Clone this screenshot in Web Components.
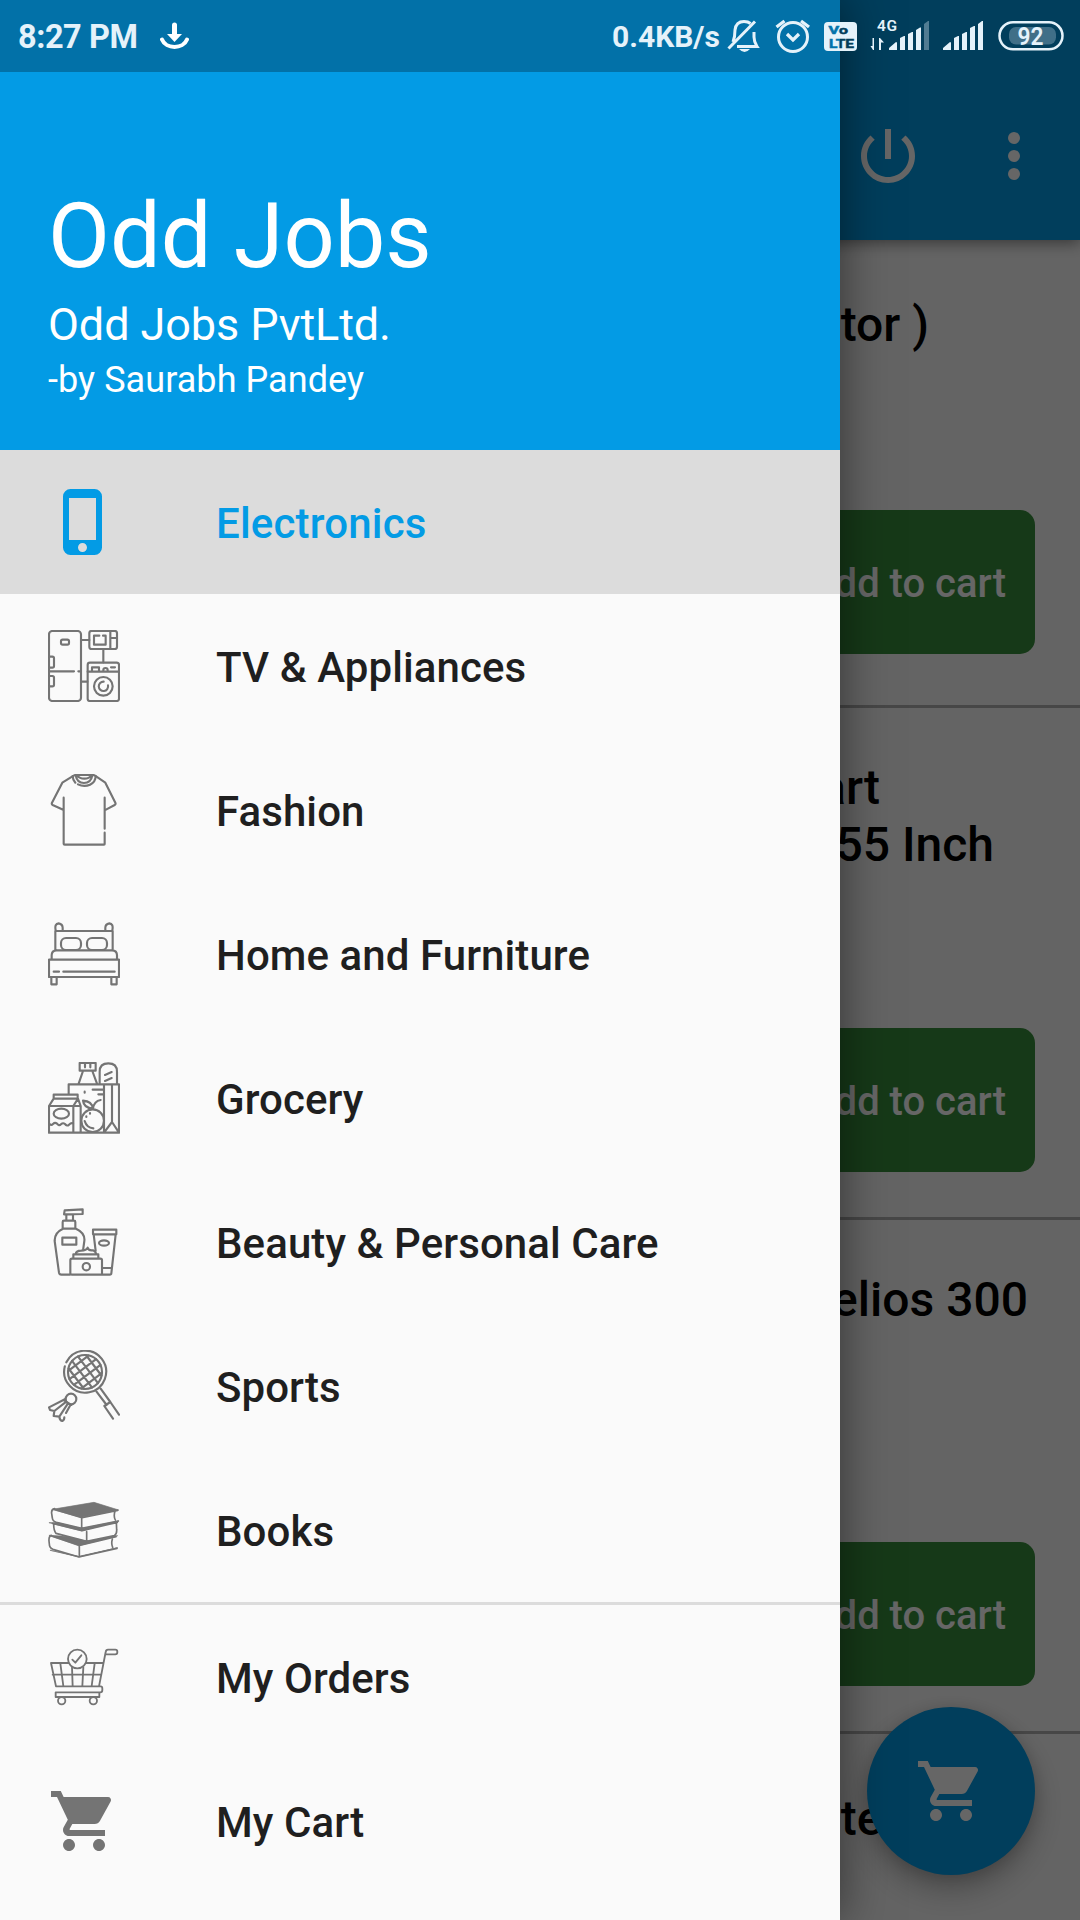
<!DOCTYPE html>
<html lang="en">
<head>
<meta charset="utf-8">
<title>Odd Jobs</title>
<style>
html,body{margin:0;width:1080px;height:1920px;overflow:hidden;background:#fafafa;font-family:Roboto,"Noto Sans",sans-serif}
</style>
</head>
<body>
<odd-app></odd-app>
<script>
const define = (name, html) => customElements.define(name, class extends HTMLElement {
  constructor() {
    super();
    this.attachShadow({ mode: 'open' }).innerHTML = typeof html === 'function' ? html(this) : html;
  }
});

const CART = 'M7 18c-1.1 0-1.99.9-1.99 2S5.9 22 7 22s2-.9 2-2-.9-2-2-2zM1 2v2h2l3.6 7.59-1.35 2.45c-.16.28-.25.61-.25.96 0 1.1.9 2 2 2h12v-2H7.42c-.14 0-.25-.11-.25-.25l.03-.12.9-1.63h7.45c.75 0 1.41-.41 1.75-1.03l3.58-6.49A1.003 1.003 0 0 0 20 4H5.21l-.94-2H1zm16 16c-1.1 0-1.99.9-1.99 2s.89 2 1.99 2 2-.9 2-2-.9-2-2-2z';

/* Line icons are drawn on a grid of three units per pixel. */
const ICONS = {
  phone: ['0 0 24 24', '<path fill="currentColor" stroke="none" d="M15.5 1h-8A2.5 2.5 0 0 0 5 3.5v17A2.5 2.5 0 0 0 7.500 23h8a2.500 2.500 0 0 0 2.500-2.500v-17A2.500 2.500 0 0 0 15.500 1zm-4 21c-.83 0-1.500-.67-1.500-1.500s.67-1.500 1.500-1.500 1.500.67 1.500 1.500-.67 1.500-1.500 1.500zm4.500-4H7V4h9v14z"/>'],
  appliances: ['144 570 216 216', `
    <rect x="147" y="573" width="96" height="210" rx="10"/>
    <rect x="183" y="599" width="24" height="15" rx="5"/>
    <path d="M147 650h10q5 0 5 5v23q0 5-5 5h-10M147 708h10q5 0 5 5v21q0 5-5 5h-10M147 694h75M235 694h8M243 600h25M310 628v39M243 725h19"/>
    <rect x="268" y="573" width="83" height="54" rx="7"/><path d="M331 573v54M331 594h20M298 587h-16v27h35v-27h-8"/>
    <rect x="263" y="668" width="94" height="115" rx="7"/><path d="M263 695h94M276 695v-13h21v13M310 695v-5q0-6 6.500-6t6.500 6v5M333 682h12"/>
    <circle cx="310" cy="739" r="28"/><path d="M311 725a14 14 0 1 0 13 11"/>`],
  fashion: ['54 72 216 216', `
    <path d="M101 143v139q0 2 3 2h118q2 0 2-2v-34M224 236v-93M101 180l-33-15q-4-2-2-7l31-60 34-21q3-2 7-2h50q4 0 7 2l31 21 30 60q2 5-2 7l-26 14"/>
    <path d="M128 78q0 11 8 20M197 78q0 18-17 26-18 8-36-1M137 76q4 23 25 23t25-23M141 76q8 10 22 10t22-10"/>`],
  furniture: ['54 504 216 216', `
    <path d="M57 629h210v52H57zM65 629v-13q0-15 15-15h166q15 0 15 15v13M76 601v-58h172v58M77 541q-4-20 9-21 13 2 12 16v6M247 541q4-20-9-21-13 2-12 16v6M64 681v22h16v-22M244 681v22h16v-22M71 665h16M100 665h154"/>
    <rect x="93" y="564" width="60" height="36" rx="15"/><rect x="171" y="564" width="60" height="36" rx="15"/>`],
  grocery: ['54 66 216 216', `
    <path d="M57 278h210M57 278v-80h95v80M130 198v80M57 198l14-22h73l8 22M71 176v-12h72v12M144 176l-14 22M116 162v-29h151v145M149 69h48v23h-48zM165 70v12M181 70v12M159 93l-13 38M187 93l14 38M209 131V95q0-25 26-25t26 25v36M225 105l20-9M225 123l20-9M222 133v145M246 133v112M222 278l24-32 21 32M188 149h34M205 163h17M164 155v3"/>
    <ellipse cx="94" cy="221" rx="23" ry="15"/><path d="M57 250q6 8 12 2t12-1q6 8 12 2t12-1q6 8 12 2t12-4"/>
    <circle cx="188" cy="242" r="34"/><path d="M189 206q-3-22-30-24 2 22 30 24zM189 206q3-23 23-26M164 243q6 20 26 22M169 229v2M180 219v2"/>`],
  beauty: ['54 498 216 216', `
    <path d="M120 704H94q-6 0-7-6L74 603q-1-25 25-37h39q28 13 25 37l-4 29M98 565v-19q0-4 4-4h30q4 0 4 4v19M109 542v-18M129 542v-18M102 523l2-12 54-3v14zM97 593h42v21H97zM189 569h70v14h-70zM191 583l6 50M257 583l-13 117q0 4-5 4H126q-5 0-5-5v-38q0-5 5-5h85q5 0 5 5v43M216 684h27M130 656v-13h75v13M137 643q1-11 16-11 16-1 20-9 1 8 12 8h5q7 4 10 12"/>
    <ellipse cx="222" cy="609" rx="15" ry="8"/><circle cx="169" cy="680" r="11"/>`],
  sports: ['54 60 216 216', `
    <path d="M109 97a63 63 0 1 1-4.500 12"/><circle cx="165" cy="126" r="51"/>
    <path transform="translate(165 126) rotate(-37)" d="M-50-11H50M-50 11H50M-38-33H38M-38 33H38M-11-50V50M11-50V50M-33-38V38M33-38V38"/>
    <path d="M199 184l31 41M212 176l29 40M223 228l18-12 26 38M223 228l26 38"/>
    <circle cx="123" cy="207" r="16"/>
    <path d="M106 207l-49 25 3 8 13 3 33-26M73 243l-2 15 17 2 24-37M88 260q1 12 9 13 6-2 6-11M120 227l-12 22M102 211l22 14"/>`],
  books: ['54 492 216 216', `
    <path fill="currentColor" stroke-width="2" d="M67 538l125-21 74 23-111 22zM58 578l24 0 73 18 111-23-110 29zM58 616l48 3 65 15 92-17-116 30zM61 661l86 20 116-28-116 26z"/>
    <path stroke-width="5" d="M74 536q-11 2-9 15l2 13q1 10 12 13l76 18 110-22M155 564v29M255 544q-5 14 1 26M71 582q0 20 7 28l92 24 83-17q8-5 7-18l-1-22M170 605v28M64 616q-8 2-7 17l1 9q0 12 11 16l78 23 114-26M148 647v32M247 628q-4 13 1 24M74 538l82 25 107-22M68 580l88 22 106-25M62 617l86 29 110-26"/>`],
  orders: ['144 153 216 216', `
    <g stroke-width="5.5"><path d="M205 219h-52l15 70h129l20-103q1-7 7-7h22q6 0 6 6v2q0 6-6 6h-28M259 219h52M158 254h146M181 220l9 68M216 232l2 56M250 232l-3 56M284 220l-9 68M168 289h134q5 0 5 7v4q0 7-6 7H167v14h131v-14"/>
    <circle cx="232" cy="207" r="28"/><path d="M217 209l9 9 18-22"/><circle cx="185" cy="332" r="11"/><circle cx="280" cy="332" r="11"/></g>`],
  cart: ['0 0 24 24', `<path fill="currentColor" stroke="none" d="${CART}"/>`],
  power: ['0 0 24 24', '<path fill="currentColor" stroke="none" d="M13 3h-2v10h2V3zm4.83 2.17l-1.42 1.42C17.99 7.86 19 9.810 19 12c0 3.870-3.130 7-7 7s-7-3.130-7-7c0-2.190 1.010-4.140 2.580-5.420L6.170 5.170C4.230 6.820 3 9.260 3 12c0 4.970 4.030 9 9 9s9-4.030 9-9c0-2.740-1.230-5.180-3.170-6.830z"/>'],
  more: ['0 0 24 24', '<g fill="currentColor" stroke="none"><circle cx="12" cy="6" r="2"/><circle cx="12" cy="12" r="2"/><circle cx="12" cy="18" r="2"/></g>']
};

define('odd-icon', el => {
  const [box, body] = ICONS[el.getAttribute('name')];
  return `<style>:host{display:block;width:72px;height:72px;flex:none}svg{display:block;width:100%;height:100%}</style>
  <svg viewBox="${box}" fill="none" stroke="currentColor" stroke-width="6.4" stroke-linecap="round" stroke-linejoin="round">${body}</svg>`;
});

define('drawer-item', `<style>
:host{display:flex;align-items:center;gap:96px;height:144px;padding-left:48px;box-sizing:border-box;color:#1f1f1f;font-size:42px;font-weight:500;letter-spacing:.08px}
:host([selected]){background:#dcdcdc;color:#039be5;letter-spacing:.18px}
::slotted(odd-icon){color:#747474}
:host([selected]) ::slotted(odd-icon){color:#039be5}
span{white-space:nowrap;padding-top:2px}
</style><slot name="icon"></slot><span><slot></slot></span>`);

define('nav-drawer', `<style>
:host{display:flex;flex-direction:column;width:840px;height:1920px;background:#fafafa;box-shadow:0 0 46px rgba(0,0,0,.5)}
header{height:450px;box-sizing:border-box;padding:0 48px 49px;background:#039be5;color:#fff;display:flex;flex-direction:column;justify-content:flex-end}
h1{margin:0 0 8px;font-weight:400;font-size:90px;line-height:106px}
p{margin:0 0 8px;font-size:45px;line-height:53px;letter-spacing:-.1px}
small{font-size:36px;line-height:42px;letter-spacing:.06px}
hr{margin:0;border:0;height:3px;background:#dcdcdc;flex:none}
</style>
<header><h1>Odd Jobs</h1><p>Odd Jobs PvtLtd.</p><small>-by Saurabh Pandey</small></header>
<nav>
<drawer-item selected><odd-icon slot="icon" name="phone"></odd-icon>Electronics</drawer-item>
<drawer-item><odd-icon slot="icon" name="appliances"></odd-icon>TV &amp; Appliances</drawer-item>
<drawer-item><odd-icon slot="icon" name="fashion"></odd-icon>Fashion</drawer-item>
<drawer-item><odd-icon slot="icon" name="furniture"></odd-icon>Home and Furniture</drawer-item>
<drawer-item><odd-icon slot="icon" name="grocery"></odd-icon>Grocery</drawer-item>
<drawer-item><odd-icon slot="icon" name="beauty"></odd-icon>Beauty &amp; Personal Care</drawer-item>
<drawer-item><odd-icon slot="icon" name="sports"></odd-icon>Sports</drawer-item>
<drawer-item><odd-icon slot="icon" name="books"></odd-icon>Books</drawer-item>
<hr>
<drawer-item><odd-icon slot="icon" name="orders"></odd-icon>My Orders</drawer-item>
<drawer-item><odd-icon slot="icon" name="cart"></odd-icon>My Cart</drawer-item>
</nav>`);

define('app-toolbar', `<style>
:host{display:flex;justify-content:flex-end;align-items:flex-end;gap:54px;height:240px;flex:none;box-sizing:border-box;padding:0 30px 48px;background:#039be5;color:#fff;box-shadow:0 3px 14px rgba(0,0,0,.45);position:relative}
</style><odd-icon name="power"></odd-icon><odd-icon name="more"></odd-icon>`);

define('product-card', el => `<style>
:host{display:flex;flex-direction:column;justify-content:space-between;align-items:flex-end;box-sizing:border-box;padding:52px 45px 45px 0;border-bottom:3px solid #b2b2b2;flex:none}
:host([clipped]){border-bottom:0}
.title{display:flex;flex-direction:column;align-items:flex-end;font-size:48px;line-height:56.5px;font-weight:500;color:#000;white-space:pre}
button{width:300px;height:144px;border:0;padding:3px 29px 0 0;text-align:right;border-radius:15px;background:#388e3c;color:#fff;font:500 40px Roboto,sans-serif;margin:0}
</style><div class="title"><slot></slot></div>${el.hasAttribute('clipped') ? '' : '<button>Add to cart</button>'}`);

define('cart-fab', `<style>
:host{display:flex;align-items:center;justify-content:center;width:168px;height:168px;border-radius:50%;background:#039be5;color:#fff;box-shadow:0 15px 30px rgba(0,0,0,.25),0 3px 16px rgba(0,0,0,.15)}
</style><odd-icon name="cart"></odd-icon>`);

define('status-bar', `<style>
:host{display:flex;width:1080px;height:72px;box-sizing:border-box;color:#e5f2fa}
.shade{width:840px;height:72px;background:rgba(0,0,0,.267)}
.row{position:absolute;inset:0;display:flex;align-items:center;height:72px}
svg{flex:none;display:block}
.time{font-size:32.5px;font-weight:700;letter-spacing:-.45px;margin-left:18px;width:142px;white-space:nowrap;padding-top:1px}
.rate{font-size:30px;font-weight:700;margin-left:423px;width:115px;white-space:nowrap}
</style>
<div class="shade"></div>
<div class="row">
<span class="time">8:27 PM</span>
<svg width="29" height="72" viewBox="160 0 29 72"><path d="M174.500 25v10" stroke="#fff" stroke-width="5" stroke-linecap="round"/><path d="M167 34h15l-7.500 8z" fill="#fff"/><path d="M162 39.500c4 10 21 10 25 0" fill="none" stroke="#fff" stroke-width="4" stroke-linecap="round"/></svg>
<span class="rate">0.4KB/s</span>
<svg width="353" height="72" viewBox="727 0 353 72" font-family="Roboto,sans-serif" fill="currentColor">
<defs><linearGradient id="split" gradientUnits="userSpaceOnUse" x1="839.500" x2="840.500" y1="0" y2="0"><stop stop-color="#0272aa"/><stop offset="1" stop-color="#023e5c"/></linearGradient></defs>
<g fill="none" stroke="currentColor" stroke-width="3">
<path d="M728.500 48.500L755 21.500M733 42q2-5 2-12 1-8.500 9-8.500 4 0 6.500 2M754 32v5q0 5 3 9.500h-20"/>
<circle cx="793" cy="37" r="14.500"/><path d="M787 34l6 6 6-6M776.500 27l8-6M809 27l-8-6" stroke-width="3.300"/>
</g>
<path d="M739 49h11q-5.500 6-11 0z"/>
<rect x="824" y="22" width="33" height="29" rx="4"/>
<g fill="url(#split)" stroke="url(#split)" stroke-width=".5" font-weight="700">
<text x="828.500" y="34.300" font-size="11" textLength="19.500" lengthAdjust="spacingAndGlyphs">Vo</text>
<text x="829" y="47.600" font-size="12.300" textLength="25" lengthAdjust="spacingAndGlyphs">LTE</text></g>
<text x="877" y="31" font-size="15.500" font-weight="600" textLength="20">4G</text>
<path d="M874 38v12h-1l-2.500-4h2V38zM879 50V38h1l4 4.500h-3V50z"/>
<path d="M889 50v-2l7-6q1 0 1 1v7zM900 50V38l4-2h1v14zM908 50V34l4-2h1v18zM916 50V30l4-2.500h1V50z"/>
<path opacity=".35" d="M924 50V24l4-3h1v29z"/>
<path d="M943 50v-2l7-6q1 0 1 1v7zM954 50V38l4-2h1v14zM962 50V34l4-2h1v18zM970 50V28l4-2h1v24zM978 50V24l4-3h1v29z"/>
<rect x="999.500" y="22.300" width="63" height="27" rx="13.500" fill="none" stroke="currentColor" stroke-width="2.500"/>
<rect x="1009" y="27" width="47" height="17.500" rx="7" opacity=".28"/>
<text x="1017.500" y="45" font-size="26.500" font-weight="600" textLength="26" lengthAdjust="spacingAndGlyphs">92</text>
</svg>
</div>`);

define('odd-app', `<style>
:host{display:block;position:relative;width:1080px;height:1920px;overflow:hidden;background:#fafafa}
main{display:flex;flex-direction:column;height:1920px;overflow:hidden}
.scrim{position:absolute;inset:0;background:rgba(0,0,0,.6)}
nav-drawer{position:absolute;left:0;top:0}
cart-fab{position:absolute;right:45px;bottom:45px}
status-bar{position:absolute;left:0;top:0}
product-card span{display:block}
</style>
<main>
<app-toolbar></app-toolbar>
<product-card style="height:468px;padding-top:57px;padding-bottom:51px"><span style="margin-right:106px">tor )</span></product-card>
<product-card style="height:512px"><span style="margin-right:155px">art</span><span style="margin-right:41px">55 Inch</span></product-card>
<product-card style="height:514px"><span style="margin-right:7px">elios 300</span></product-card>
<product-card clipped style="height:186px;padding-top:57px"><span style="margin-right:152.5px">nte</span></product-card>
</main>
<cart-fab></cart-fab>
<div class="scrim"></div>
<nav-drawer></nav-drawer>
<status-bar></status-bar>`);
</script>
</body>
</html>
